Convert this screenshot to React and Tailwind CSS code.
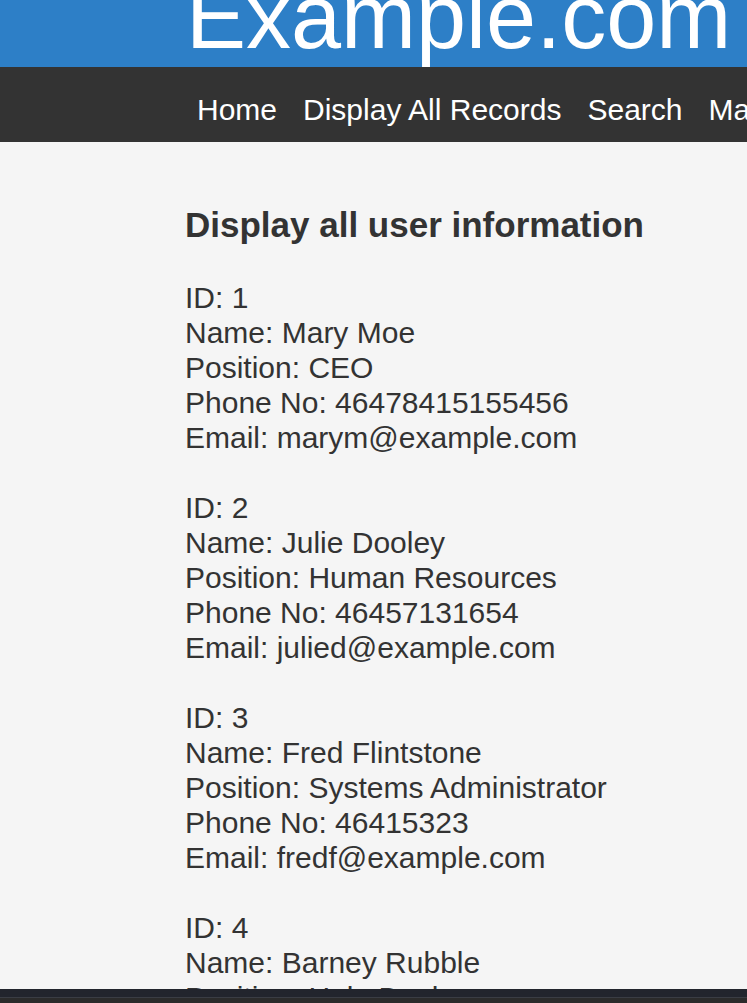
const records = [
  { id: 1, name: 'Mary Moe', position: 'CEO', phone: '46478415155456', email: 'marym@example.com' },
  { id: 2, name: 'Julie Dooley', position: 'Human Resources', phone: '46457131654', email: 'julied@example.com' },
  { id: 3, name: 'Fred Flintstone', position: 'Systems Administrator', phone: '46415323', email: 'fredf@example.com' },
  { id: 4, name: 'Barney Rubble', position: 'Help Desk', phone: '4641532399', email: 'barneyr@example.com' },
];

export default function App() {
  return (
    <div className="min-h-[1003px] bg-[#f5f5f5] text-[#333] overflow-hidden" style={{ fontFamily: '"Liberation Sans", Arial, sans-serif' }}>
      {/* Header */}
      <header className="h-[67px] bg-[#2d7fc7] overflow-hidden whitespace-nowrap">
        <h1 className="mt-[-28px] ml-[186px] text-[90px] leading-[90px] text-white">Example.com</h1>
      </header>

      {/* Nav */}
      <nav className="h-[75px] bg-[#333333] pt-[27px] pl-[197px] flex gap-[26px] whitespace-nowrap text-[30px] leading-[32px] text-white">
        <a href="#">Home</a>
        <a href="#">Display All Records</a>
        <a href="#">Search</a>
        <a href="#">Manage</a>
      </nav>

      {/* Content */}
      <main className="pl-[185px] pt-[63px] whitespace-nowrap">
        <h2 className="text-[35px] leading-[40px] font-bold">Display all user information</h2>
        <div className="mt-[35px] flex flex-col gap-[35px] text-[30px] leading-[35px]">
          {records.map((r) => (
            <div key={r.id}>
              <p>ID: {r.id}</p>
              <p>Name: {r.name}</p>
              <p>Position: {r.position}</p>
              <p>Phone No: {r.phone}</p>
              <p>Email: {r.email}</p>
            </div>
          ))}
        </div>
      </main>

      {/* Bottom bar */}
      <div className="fixed bottom-0 left-0 right-0 h-[14px] flex flex-col">
        <div className="h-[8px] bg-[#22252d]" />
        <div className="h-[1px] bg-[#3a3d44]" />
        <div className="flex-1 bg-[#2b2b2b]" />
      </div>
    </div>
  );
}
